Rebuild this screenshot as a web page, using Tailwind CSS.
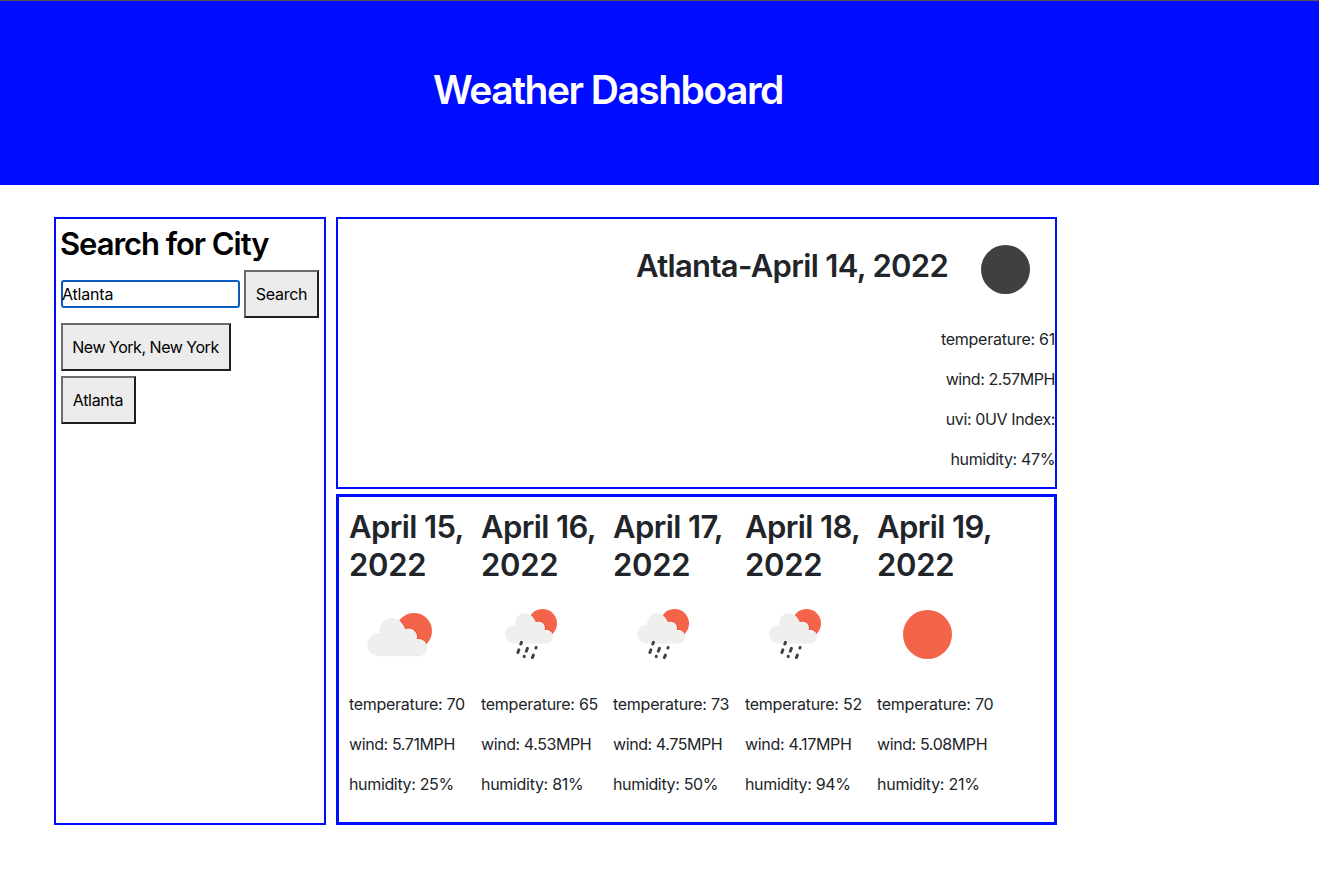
<!DOCTYPE html>
<html lang="en">
<head>
<meta charset="utf-8">
<title>Weather Dashboard</title>
<script src="https://cdn.jsdelivr.net/npm/@tailwindcss/browser@4"></script>
</head>
<body class="bg-white font-['Inter',sans-serif] text-[#212529] text-base leading-6 h-[872px] overflow-hidden">
<svg class="absolute size-0">
  <clipPath id="disc"><circle cx="65" cy="46" r="18"/></clipPath>
  <symbol id="cloudsun" viewBox="0 0 100 100">
    <circle cx="65" cy="46" r="18" fill="#f4644a"/>
    <g fill="#e84a2c" clip-path="url(#disc)"><circle cx="43" cy="45.500" r="13"/><circle cx="59.800" cy="51.800" r="9.300"/><circle cx="69.500" cy="62.500" r="9.600"/></g>
    <g fill="#efefee"><circle cx="30" cy="59.500" r="11.700"/><circle cx="43" cy="45.500" r="12.400"/><circle cx="59.800" cy="51.800" r="8.300"/><circle cx="69.500" cy="62.500" r="8.700"/><path d="M30 50H43V40H54L60 50L68 56V71.200H30Z"/></g>
  </symbol>
  <symbol id="rain" viewBox="0 0 100 100">
    <use href="#cloudsun" x="0" y="0" width="100" height="100" transform="translate(9.600 1.600) scale(.8)"/>
    <g stroke="#404041" stroke-width="3" stroke-linecap="round"><path d="M40.500 57.300L39.800 59M37.900 64.800L36.900 67.500M46.500 63.300L45.300 66.200M55.100 62.500L54.900 63M43.300 71.200L43.200 71.600M52.400 70.100L51.400 72.500"/></g>
  </symbol>
  <symbol id="sun" viewBox="0 0 100 100"><circle cx="50.500" cy="49.500" r="24.500" fill="#f4644a"/></symbol>
  <symbol id="night" viewBox="0 0 100 100"><circle cx="50.500" cy="50.500" r="24.500" fill="#404041"/></symbol>
</svg>
<header class="h-[185px] bg-[#000cff] border-t border-[#555] pt-[65px] pl-[433px]">
  <h1 class="text-[39px] leading-[48px] font-semibold text-white whitespace-nowrap"><span class="tracking-[-1.5px]">Weather Dashboard</span></h1>
</header>
<main class="flex gap-[10px] pl-[54px] pt-8">
  <section class="w-[272px] h-[608px] border-2 border-[#000cff] pl-[5px] pt-[6px] text-black whitespace-nowrap">
    <h2 class="text-[31px] leading-[38px] font-semibold -ml-px"><span class="tracking-[-1.05px]">Search for City</span></h2>
    <div class="flex items-center gap-1 mt-[7px]">
      <div class="w-[179px] h-7 border-2 border-[#0a5cc0] rounded-[3px] bg-white leading-6"><span class="tracking-[-0.2px] -ml-px">Atlanta</span></div>
      <button class="h-12 w-[75px] border-2 border-t-[#6b6b6b] border-l-[#6b6b6b] border-r-[#1f1f1f] border-b-[#1f1f1f] bg-[#ececec]"><span class="tracking-[-0.3px]">Search</span></button>
    </div>
    <div class="flex flex-col items-start gap-[5px] mt-[5px]">
      <button class="h-12 w-[170px] border-2 border-t-[#6b6b6b] border-l-[#6b6b6b] border-r-[#1f1f1f] border-b-[#1f1f1f] bg-[#ececec] pr-px"><span class="tracking-[-0.48px]">New York, New York</span></button>
      <button class="h-12 w-[75px] border-2 border-t-[#6b6b6b] border-l-[#6b6b6b] border-r-[#1f1f1f] border-b-[#1f1f1f] bg-[#ececec] pr-px"><span class="tracking-[-0.3px]">Atlanta</span></button>
    </div>
  </section>
  <div class="flex flex-col gap-[5px] w-[721px] whitespace-nowrap">
    <section class="h-[272px] border-2 border-[#000cff]">
      <div class="flex justify-end">
        <h2 class="w-[319px] text-[31px] leading-[38px] font-semibold pt-7"><span class="tracking-[-0.66px]">Atlanta-April 14, 2022</span></h2>
        <svg class="size-[100px]"><use href="#night"/></svg>
      </div>
      <div class="flex flex-col items-end gap-4 pt-2">
        <p><span class="tracking-[-0.25px]">temperature: 61</span></p>
        <p><span class="tracking-[-0.42px]">wind: 2.57MPH</span></p>
        <p><span class="tracking-[-0.37px]">uvi: 0UV Index:</span></p>
        <p><span class="tracking-[-0.36px]">humidity: 47%</span></p>
      </div>
    </section>
    <section class="h-[331px] border-3 border-[#000cff] pl-[10px] pt-[11px] flex">
      <article class="w-[132px]">
        <h2 class="text-[31px] leading-[38px] font-semibold"><span class="tracking-[-0.6px]">April 15,</span><br><span class="tracking-[-0.3px]">2022</span></h2>
        <svg class="size-[100px] mt-px"><use href="#cloudsun"/></svg>
        <div class="flex flex-col gap-4 mt-[7px]"><p><span class="tracking-[-0.3px]">temperature: 70</span></p><p><span class="tracking-[-0.4px]">wind: 5.71MPH</span></p><p><span class="tracking-[-0.35px]">humidity: 25%</span></p></div>
      </article>
      <article class="w-[132px]">
        <h2 class="text-[31px] leading-[38px] font-semibold"><span class="tracking-[-0.6px]">April 16,</span><br><span class="tracking-[-0.3px]">2022</span></h2>
        <svg class="size-[100px] mt-px"><use href="#rain"/></svg>
        <div class="flex flex-col gap-4 mt-[7px]"><p><span class="tracking-[-0.27px]">temperature: 65</span></p><p><span class="tracking-[-0.42px]">wind: 4.53MPH</span></p><p><span class="tracking-[-0.3px]">humidity: 81%</span></p></div>
      </article>
      <article class="w-[132px]">
        <h2 class="text-[31px] leading-[38px] font-semibold"><span class="tracking-[-0.6px]">April 17,</span><br><span class="tracking-[-0.3px]">2022</span></h2>
        <svg class="size-[100px] mt-px"><use href="#rain"/></svg>
        <div class="flex flex-col gap-4 mt-[7px]"><p><span class="tracking-[-0.27px]">temperature: 73</span></p><p><span class="tracking-[-0.42px]">wind: 4.75MPH</span></p><p><span class="tracking-[-0.35px]">humidity: 50%</span></p></div>
      </article>
      <article class="w-[132px]">
        <h2 class="text-[31px] leading-[38px] font-semibold"><span class="tracking-[-0.6px]">April 18,</span><br><span class="tracking-[-0.3px]">2022</span></h2>
        <svg class="size-[100px] mt-px"><use href="#rain"/></svg>
        <div class="flex flex-col gap-4 mt-[7px]"><p><span class="tracking-[-0.27px]">temperature: 52</span></p><p><span class="tracking-[-0.3px]">wind: 4.17MPH</span></p><p><span class="tracking-[-0.35px]">humidity: 94%</span></p></div>
      </article>
      <article class="w-[132px]">
        <h2 class="text-[31px] leading-[38px] font-semibold"><span class="tracking-[-0.6px]">April 19,</span><br><span class="tracking-[-0.3px]">2022</span></h2>
        <svg class="size-[100px] mt-px"><use href="#sun"/></svg>
        <div class="flex flex-col gap-4 mt-[7px]"><p><span class="tracking-[-0.27px]">temperature: 70</span></p><p><span class="tracking-[-0.4px]">wind: 5.08MPH</span></p><p><span class="tracking-[-0.27px]">humidity: 21%</span></p></div>
      </article>
    </section>
  </div>
</main>
</body>
</html>
